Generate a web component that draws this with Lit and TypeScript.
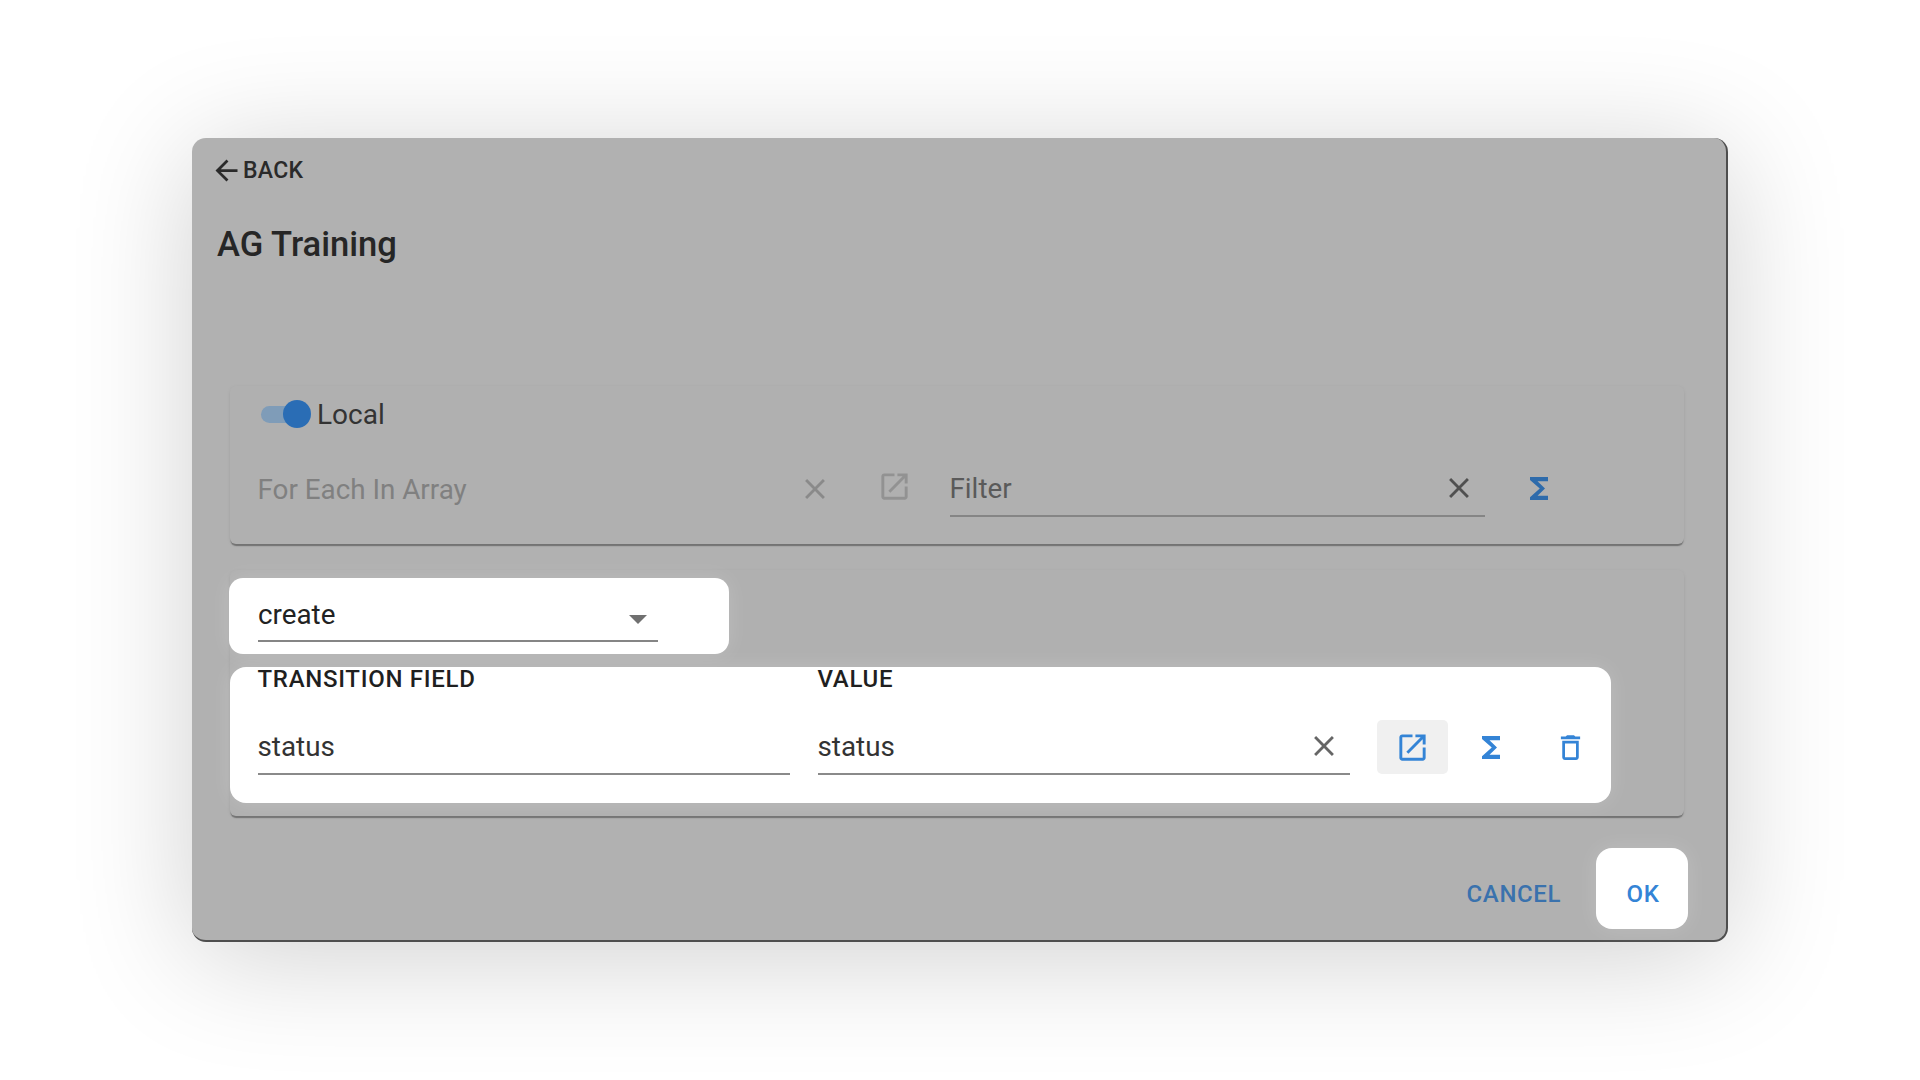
import { LitElement, html, css, svg } from "lit";
import { customElement } from "lit/decorators.js";

const CLOSE = svg`<path d="M19 6.41L17.59 5 12 10.59 6.41 5 5 6.41 10.59 12 5 17.59 6.41 19 12 13.41 17.59 19 19 17.59 13.41 12z"/>`;
const OPEN = svg`<path d="M19 19H5V5h7V3H5c-1.11 0-2 .9-2 2v14c0 1.1.89 2 2 2h14c1.1 0 2-.9 2-2v-7h-2v7zM14 3v2h3.59l-9.83 9.83 1.41 1.41L19 6.41V10h2V3h-7z"/>`;
const TRASH = svg`<path d="M6 19c0 1.1.9 2 2 2h8c1.1 0 2-.9 2-2V7H6v12zM8 9h8v10H8V9zm7.5-5l-1-1h-5l-1 1H5v2h14V4h-3.5z"/>`;
const BACK = svg`<path d="M20 11H7.83l5.59-5.59L12 4l-8 8 8 8 1.41-1.41L7.83 13H20v-2z"/>`;
const SIGMA = svg`<path d="M18 4H6v2l6.5 6L6 18v2h12v-3h-7l5-5-5-5h7z"/>`;

const icon = (p: unknown, cls: string) => html`<svg class="${cls}" viewBox="0 0 24 24">${p}</svg>`;
const sigma = (cls: string) => html`<svg class="sigma ${cls}" viewBox="6 4 12 16" preserveAspectRatio="none">${SIGMA}</svg>`;

@customElement("app-root")
export class AppRoot extends LitElement {
  static styles = css`
    :host {
      display: block;
      width: 1920px;
      height: 1080px;
      background: #fff;
      overflow: hidden;
      font-family: Roboto, "Liberation Sans", sans-serif;
      color: #2a2a2a;
    }
    * { box-sizing: border-box; }
    svg { display: block; flex: none; fill: currentColor; }
    .page { padding: 138px 0 0 192px; }
    .dialog {
      width: 1536px;
      height: 804px;
      background: #b1b1b1;
      border-radius: 14px;
      border-right: 2px solid #4e4e4e;
      border-bottom: 2px solid #4e4e4e;
      box-shadow: 0 14px 120px rgba(0, 0, 0, 0.19);
      padding-top: 16px;
    }
    .back {
      display: flex;
      align-items: center;
      margin-left: 18px;
      height: 33px;
      font-size: 23px;
      font-weight: 500;
      letter-spacing: 0.3px;
    }
    .back .i { width: 33px; height: 33px; }
    .title {
      margin: 37px 0 0 25px;
      height: 40px;
      line-height: 40px;
      font-size: 34.6px;
      font-weight: 500;
      color: #262626;
    }
    .panel {
      margin: 0 42px 0 38px;
      border-radius: 6px;
      background: #b0b0b0;
      box-shadow: 0 3px 1px -1px rgba(0,0,0,.24), 0 2px 1px rgba(0,0,0,.12), 0 1px 4px rgba(0,0,0,.05);
    }
    .p1 { margin-top: 122px; height: 158px; padding: 13px 0 0 28px; }
    .p2 { margin-top: 26px; height: 246px; padding-top: 8px; }
    .local { display: flex; align-items: center; height: 30px; font-size: 28px; color: #333; }
    .toggle { position: relative; width: 50px; height: 30px; margin: 0 6px 0 3px; }
    .track {
      width: 42px; height: 17px; margin-top: 7px;
      border-radius: 9px; background: #7f9cb8;
    }
    .thumb {
      position: absolute; left: 22px; top: 1px;
      width: 28px; height: 28px; border-radius: 50%;
      background: #2a6db5;
    }
    .row { display: flex; align-items: center; margin-top: 32px; }
    .field {
      display: flex; align-items: center; justify-content: space-between;
      height: 56px; font-size: 27.8px; padding-right: 9px;
    }
    .field .x { width: 34px; height: 34px; color: #666; }
    .each { width: 583px; color: #808080; margin-left: -0.5px; }
    .each .x { color: #8a8a8a; }
    .dim { width: 35px; height: 35px; color: #929292; margin: -6px 0 0 36px; }
    .filter { width: 535px; margin-left: 38px; color: #5a5a5a; border-bottom: 2px solid #858585; }
    .filter .x { color: #505050; }
    .sigma { width: 18px; height: 23px; }
    .sg { color: #2e6bab; margin: -2px 0 0 45px; }
    .spot { background: #fff; box-shadow: 0 0 22px rgba(255,255,255,.16); }
    .create {
      margin-left: -1px; width: 500px; height: 76px;
      border-radius: 14px; padding: 8px 0 0 29px;
    }
    .select {
      position: relative; display: flex; align-items: center;
      width: 400px; height: 56px; padding-top: 2px; font-size: 27.8px; color: #222;
      border-bottom: 2px solid #858585;
    }
    .caret {
      position: absolute; left: 371px; top: 29px;
      width: 0; height: 0;
      border-left: 9px solid transparent; border-right: 9px solid transparent;
      border-top: 9px solid #707070;
    }
    .table {
      margin-top: 13px; width: 1381px; height: 136px;
      border-radius: 16px; padding-left: 27.5px;
    }
    .grid { display: grid; grid-template-columns: 532px 532px auto; column-gap: 28px; }
    .head {
      height: 24px; line-height: 24px; font-size: 24px; font-weight: 500;
      color: #1f1f1f; letter-spacing: 0.7px;
    }
    .body { margin-top: 28px; align-items: center; }
    .cell { color: #333; border-bottom: 2px solid #8a8a8a; }
    .actions { display: flex; gap: 8px; margin-left: -1px; }
    .act {
      flex: none;
      display: flex; align-items: center; justify-content: center;
      width: 71px; height: 54px; color: #3484d6; border-radius: 5px;
    }
    .act.on { background: #f0f0f0; }
    .act .big { width: 35px; height: 35px; }
    .act .tr { width: 33px; height: 33px; }
    .footer { display: flex; justify-content: flex-end; align-items: center; gap: 35px; margin: 32px 38px 0 0; height: 81px; }
    .btn { font-size: 24px; font-weight: 500; letter-spacing: 0.6px; }
    .cancel { color: #3a72ad; padding-top: 11px; }
    .ok {
      display: flex; align-items: center; justify-content: center;
      width: 92px; height: 81px; padding: 11px 0 0 2px;
      border-radius: 16px; color: #3484d6;
    }
  `;

  render() {
    return html`
      <div class="page">
        <div class="dialog">
          <div class="back">${icon(BACK, "i")}BACK</div>
          <div class="title">AG Training</div>
          <section class="panel p1">
            <div class="local">
              <div class="toggle"><div class="track"></div><div class="thumb"></div></div>
              Local
            </div>
            <div class="row">
              <div class="field each">For Each In Array${icon(CLOSE, "x")}</div>
              ${icon(OPEN, "dim")}
              <div class="field filter">Filter${icon(CLOSE, "x")}</div>
              ${sigma("sg")}
            </div>
          </section>
          <section class="panel p2">
            <div class="spot create">
              <div class="select">create<span class="caret"></span></div>
            </div>
            <div class="spot table">
              <div class="grid head"><div>TRANSITION FIELD</div><div>VALUE</div></div>
              <div class="grid body">
                <div class="field cell">status</div>
                <div class="field cell">status${icon(CLOSE, "x")}</div>
                <div class="actions">
                  <div class="act on">${icon(OPEN, "big")}</div>
                  <div class="act">${sigma("")}</div>
                  <div class="act">${icon(TRASH, "tr")}</div>
                </div>
              </div>
            </div>
          </section>
          <div class="footer">
            <div class="btn cancel">CANCEL</div>
            <div class="btn ok spot">OK</div>
          </div>
        </div>
      </div>
    `;
  }
}
